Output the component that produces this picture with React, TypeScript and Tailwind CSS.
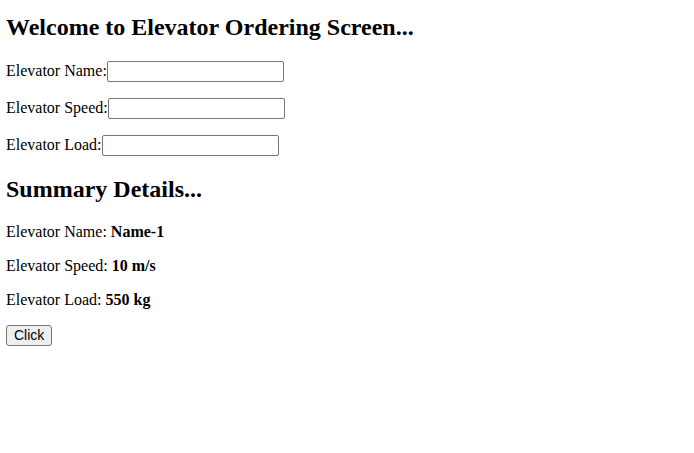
import { useState } from 'react';

const inputClass =
  "align-baseline w-[177px] h-[21px] border border-[#767676] rounded-[2px] bg-white px-[2px] py-px text-[13.333px] leading-[normal] font-['Liberation_Sans',Arial,sans-serif] outline-none";

export default function App() {
  const [name, setName] = useState('');
  const [speed, setSpeed] = useState('');
  const [load, setLoad] = useState('');

  return (
    <div className="mx-[6px] text-black text-[16px] leading-[normal] font-['Liberation_Serif','Times_New_Roman',serif]">
      <h2 className="mt-[14px] mb-[19.92px] text-[24px] font-bold leading-[normal]">Welcome to Elevator Ordering Screen...</h2>

      <p className="my-4">
        Elevator Name:
        <input className={inputClass} value={name} onChange={(e) => setName(e.target.value)} />
      </p>
      <p className="my-4">
        Elevator Speed:
        <input className={inputClass} value={speed} onChange={(e) => setSpeed(e.target.value)} />
      </p>
      <p className="my-4">
        Elevator Load:
        <input className={inputClass} value={load} onChange={(e) => setLoad(e.target.value)} />
      </p>

      <h2 className="my-[19.92px] text-[24px] font-bold leading-[normal]">Summary Details...</h2>

      <p className="my-4">
        Elevator Name: <b className="font-bold">Name-1</b>
      </p>
      <p className="my-4">
        Elevator Speed: <b className="font-bold">10 m/s</b>
      </p>
      <p className="my-4">
        Elevator Load: <b className="font-bold">550 kg</b>
      </p>

      <div>
        <button className="align-baseline h-[21px] border border-[#767676] rounded-[3px] bg-[#efefef] px-[7px] text-[14px] leading-[normal] font-['Liberation_Sans',Arial,sans-serif] text-black">
          Click
        </button>
      </div>
    </div>
  );
}
